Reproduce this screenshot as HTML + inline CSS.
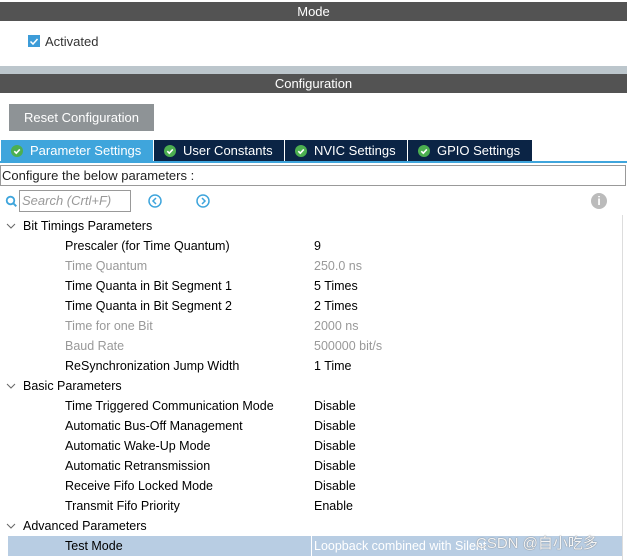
<html><head><style>
body{margin:0;width:627px;height:560px;background:#fff;font-family:"Liberation Sans",sans-serif;font-size:12.5px;color:#000;position:relative;overflow:hidden}
div{position:absolute;box-sizing:border-box}
.bar{left:0;width:627px;background:#535353;color:#fff;text-align:center;font-size:13px}
.tab{top:140px;height:21px;background:#0b2445;color:#fff;font-size:13px;line-height:21px;padding-left:10px;white-space:nowrap}
.ck{display:inline-block;width:12px;height:12px;vertical-align:-2px;margin-right:7px}
.r{left:0;width:627px;height:20px;line-height:20px;white-space:nowrap}
.l{position:absolute;left:65px}.v{position:absolute;left:314px}
.g{color:#999}
.h{position:absolute;left:23px}
.a{position:absolute;left:6px;top:6px;width:10px;height:8px}
</style></head><body>
<div class="bar" style="top:2px;height:19px;line-height:19px">Mode</div>
<div style="left:28px;top:35px;width:12px;height:12px;background:#3d9cd8"><svg width="12" height="12"><path d="M2.5 6.5l2.5 2.5 4.5-5" stroke="#fff" stroke-width="1.5" fill="none"/></svg></div>
<div style="left:45px;top:34px;line-height:16px;color:#333;font-size:13px">Activated</div>
<div style="left:0;top:66px;width:627px;height:8px;background:#bcc6cc"></div>
<div class="bar" style="top:74px;height:19px;line-height:19px">Configuration</div>
<div style="left:9px;top:104px;width:145px;height:27px;background:#8e9396;color:#fff;font-size:13px;line-height:27px;text-align:center">Reset Configuration</div>
<div class="tab" style="left:1px;width:152px;background:#3fa5dc"><svg class="ck"><circle cx="6" cy="6" r="6" fill="#4caf50"/><path d="M3.3 6.2l2 2 3.5-3.8" stroke="#fff" stroke-width="1.6" fill="none"/></svg>Parameter Settings</div>
<div class="tab" style="left:154px;width:130px"><svg class="ck"><circle cx="6" cy="6" r="6" fill="#4caf50"/><path d="M3.3 6.2l2 2 3.5-3.8" stroke="#fff" stroke-width="1.6" fill="none"/></svg>User Constants</div>
<div class="tab" style="left:285px;width:122px"><svg class="ck"><circle cx="6" cy="6" r="6" fill="#4caf50"/><path d="M3.3 6.2l2 2 3.5-3.8" stroke="#fff" stroke-width="1.6" fill="none"/></svg>NVIC Settings</div>
<div class="tab" style="left:408px;width:124px"><svg class="ck"><circle cx="6" cy="6" r="6" fill="#4caf50"/><path d="M3.3 6.2l2 2 3.5-3.8" stroke="#fff" stroke-width="1.6" fill="none"/></svg>GPIO Settings</div>
<div style="left:0;top:161px;width:627px;height:2px;background:#3fa5dc"></div>
<div style="left:0;top:165px;width:626px;height:21px;border:1px solid #999;line-height:19px;padding-left:1px;color:#222;font-size:13px">Configure the below parameters :</div>
<svg style="position:absolute;left:5px;top:195px" width="13" height="13"><circle cx="5.5" cy="5.5" r="3.8" stroke="#3fa5dc" stroke-width="1.8" fill="none"/><path d="M8.3 8.3l3 3" stroke="#3fa5dc" stroke-width="2"/></svg>
<div style="left:19px;top:190px;width:112px;height:22px;border:1px solid #999;color:#999;font-style:italic;line-height:20px;padding-left:2px;font-size:13px">Search (Crtl+F)</div>
<svg style="position:absolute;left:147px;top:193px" width="16" height="16"><circle cx="8" cy="8" r="6" stroke="#3fa5dc" stroke-width="1.5" fill="none"/><path d="M9 5l-3 3 3 3" stroke="#3fa5dc" stroke-width="1.5" fill="none"/></svg>
<svg style="position:absolute;left:195px;top:193px" width="16" height="16"><circle cx="8" cy="8" r="6" stroke="#3fa5dc" stroke-width="1.5" fill="none"/><path d="M7 5l3 3-3 3" stroke="#3fa5dc" stroke-width="1.5" fill="none"/></svg>
<div style="left:591px;top:193px;width:16px;height:16px;border-radius:50%;background:#bbb;color:#fff;font-weight:bold;font-size:12px;line-height:16px;text-align:center">i</div>
<div style="left:622px;top:215px;width:1px;height:345px;background:#ddd"></div>
<div style="left:8px;top:536px;width:614px;height:20px;background:#b8cde3"></div>
<div style="left:311px;top:536px;width:1px;height:20px;background:#fff"></div>
<div class="r" style="top:216px"><svg class="a"><path d="M1 2l4 4 4-4" stroke="#666" fill="none"/></svg><span class="h">Bit Timings Parameters</span></div>
<div class="r" style="top:236px"><span class="l">Prescaler (for Time Quantum)</span><span class="v">9</span></div>
<div class="r g" style="top:256px"><span class="l">Time Quantum</span><span class="v">250.0 ns</span></div>
<div class="r" style="top:276px"><span class="l">Time Quanta in Bit Segment 1</span><span class="v">5 Times</span></div>
<div class="r" style="top:296px"><span class="l">Time Quanta in Bit Segment 2</span><span class="v">2 Times</span></div>
<div class="r g" style="top:316px"><span class="l">Time for one Bit</span><span class="v">2000 ns</span></div>
<div class="r g" style="top:336px"><span class="l">Baud Rate</span><span class="v">500000 bit/s</span></div>
<div class="r" style="top:356px"><span class="l">ReSynchronization Jump Width</span><span class="v">1 Time</span></div>
<div class="r" style="top:376px"><svg class="a"><path d="M1 2l4 4 4-4" stroke="#666" fill="none"/></svg><span class="h">Basic Parameters</span></div>
<div class="r" style="top:396px"><span class="l">Time Triggered Communication Mode</span><span class="v">Disable</span></div>
<div class="r" style="top:416px"><span class="l">Automatic Bus-Off Management</span><span class="v">Disable</span></div>
<div class="r" style="top:436px"><span class="l">Automatic Wake-Up Mode</span><span class="v">Disable</span></div>
<div class="r" style="top:456px"><span class="l">Automatic Retransmission</span><span class="v">Disable</span></div>
<div class="r" style="top:476px"><span class="l">Receive Fifo Locked Mode</span><span class="v">Disable</span></div>
<div class="r" style="top:496px"><span class="l">Transmit Fifo Priority</span><span class="v">Enable</span></div>
<div class="r" style="top:516px"><svg class="a"><path d="M1 2l4 4 4-4" stroke="#666" fill="none"/></svg><span class="h">Advanced Parameters</span></div>
<div class="r" style="top:536px"><span class="l">Test Mode</span><span class="v" style="color:#fff">Loopback combined with Silent</span></div>
<div style="left:476px;top:532px;font-family:'Liberation Sans','Noto Sans CJK SC',sans-serif;font-size:15px;color:#f4f4f4;text-shadow:0 0 1px #555;white-space:nowrap">CSDN @自小吃多</div>
</body></html>
